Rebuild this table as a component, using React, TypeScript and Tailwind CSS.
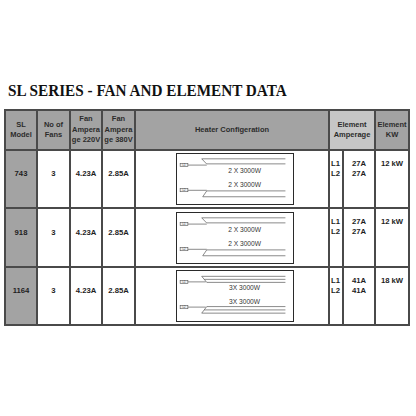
import React from "react";

const HDR = "bg-[#a3a3a3]";
const cellTxt = "text-[7.7px] font-bold text-[#1e1e1e] leading-[10px]";
const hdrTxt = "text-[7.5px] font-bold text-[#2c2c2c] leading-[10.5px] text-center whitespace-nowrap";

function Heater({ label, three }: { label: string; three?: boolean }) {
  const stroke = "#5a5a5a";
  const font = "'Liberation Sans', Arial, sans-serif";
  return (
    <div className="w-[118px] h-[52px] border-[1.5px] border-[#2a2a2a] bg-white">
      <svg viewBox="1.5 1.5 115 49" className="w-full h-full block">
        <rect x="4.6" y="10.6" width="7.7" height="3" fill="#f0f0f0" stroke="#555" strokeWidth="0.6" />
        <text x="8.45" y="13" fontSize="2.6" textAnchor="middle" fill="#333" fontFamily={font}>L1</text>
        <rect x="4.6" y="35.6" width="7.7" height="3" fill="#f0f0f0" stroke="#555" strokeWidth="0.6" />
        <text x="8.45" y="38" fontSize="2.6" textAnchor="middle" fill="#333" fontFamily={font}>L2</text>
        {three ? (
          <g stroke={stroke} strokeWidth="0.7" fill="none">
            <line x1="12.3" y1="12" x2="30" y2="12" />
            <line x1="26" y1="6.5" x2="31" y2="12.5" />
            <line x1="26" y1="6.5" x2="109" y2="6.5" />
            <line x1="28.5" y1="9.5" x2="109" y2="9.5" />
            <line x1="31" y1="12.5" x2="109" y2="12.5" />
            <line x1="12.3" y1="37" x2="30" y2="37" />
            <line x1="31" y1="36.5" x2="26" y2="43" />
            <line x1="31" y1="36.5" x2="109" y2="36.5" />
            <line x1="28.5" y1="39.8" x2="109" y2="39.8" />
            <line x1="26" y1="43" x2="109" y2="43" />
          </g>
        ) : (
          <g stroke={stroke} strokeWidth="0.7" fill="none">
            <line x1="12.3" y1="12.2" x2="31" y2="12.2" />
            <line x1="26" y1="6" x2="31" y2="11.2" />
            <line x1="26" y1="6" x2="109" y2="6" />
            <line x1="31" y1="11" x2="109" y2="11" />
            <line x1="12.3" y1="37.2" x2="31" y2="37.2" />
            <line x1="31" y1="37.8" x2="27" y2="43.6" />
            <line x1="31" y1="37.8" x2="109" y2="37.8" />
            <line x1="27" y1="43.6" x2="109" y2="43.6" />
          </g>
        )}
        <text x="68.5" y="19.6" fontSize="6.6" textAnchor="middle" fill="#333" fontFamily={font}>{label}</text>
        <text x="68.5" y="33.6" fontSize="6.6" textAnchor="middle" fill="#333" fontFamily={font}>{label}</text>
      </svg>
    </div>
  );
}

const rows = [
  { sl: "743", fans: "3", a220: "4.23A", a380: "2.85A", label: "2 X 3000W", amp: "27A", kw: "12 kW", h: "h-[56px]", three: false },
  { sl: "918", fans: "3", a220: "4.23A", a380: "2.85A", label: "2 X 3000W", amp: "27A", kw: "12 kW", h: "h-[57px]", three: false },
  { sl: "1164", fans: "3", a220: "4.23A", a380: "2.85A", label: "3X 3000W", amp: "41A", kw: "18 kW", h: "h-[56px]", three: true },
];

export default function App() {
  return (
    <div className="w-[416px] h-[416px] bg-white" style={{ fontFamily: "'Liberation Sans', Arial, sans-serif" }}>
      <div className="pt-[81px] pl-[8px]">
        <h1
          className="text-[17px] font-bold text-[#111] leading-[20px] whitespace-nowrap scale-x-[0.895] origin-left"
          style={{ fontFamily: "'Liberation Serif', 'Times New Roman', serif" }}
        >
          SL SERIES - FAN AND ELEMENT DATA
        </h1>
      </div>
      <div className="ml-[4px] mt-[8px] w-[406px] bg-[#4a4a4a] p-[2px] grid gap-[2px] grid-cols-[30px_31px_30px_31px_192px_12px_30px_32px]">
        <div className={`${HDR} h-[38px] flex items-center justify-center ${hdrTxt}`}>SL<br />Model</div>
        <div className={`${HDR} flex items-center justify-center ${hdrTxt}`}>No of<br />Fans</div>
        <div className={`${HDR} flex items-center justify-center ${hdrTxt} leading-[9.7px]`}>Fan<br />Ampera<br />ge 220V</div>
        <div className={`${HDR} flex items-center justify-center ${hdrTxt} leading-[9.7px]`}>Fan<br />Ampera<br />ge 380V</div>
        <div className={`${HDR} flex items-center justify-center ${hdrTxt}`}>Heater Configeration</div>
        <div className={`bg-[#c6c6c6] col-span-2 flex items-center justify-center ${hdrTxt}`}>Element<br />Amperage</div>
        <div className={`${HDR} flex items-center justify-center ${hdrTxt}`}>Element<br />KW</div>
        {rows.map((r) => (
          <React.Fragment key={r.sl}>
            <div className={`${HDR} ${r.h} flex items-center justify-center pb-[10px] ${cellTxt}`}>{r.sl}</div>
            <div className={`bg-white flex items-center justify-center pb-[10px] ${cellTxt}`}>{r.fans}</div>
            <div className={`bg-white flex items-center justify-center pb-[10px] ${cellTxt}`}>{r.a220}</div>
            <div className={`bg-white flex items-center justify-center pb-[10px] ${cellTxt}`}>{r.a380}</div>
            <div className="bg-white flex items-center pl-[40px]">
              <Heater label={r.label} three={r.three} />
            </div>
            <div className={`bg-white flex flex-col items-start pl-[1px] pt-[8px] ${cellTxt}`}>
              <span>L1</span>
              <span>L2</span>
            </div>
            <div className={`bg-white flex flex-col items-center pt-[8px] ${cellTxt}`}>
              <span>{r.amp}</span>
              <span>{r.amp}</span>
            </div>
            <div className={`bg-white flex flex-col items-center pt-[8px] ${cellTxt} whitespace-nowrap`}>
              <span>{r.kw}</span>
            </div>
          </React.Fragment>
        ))}
      </div>
    </div>
  );
}
